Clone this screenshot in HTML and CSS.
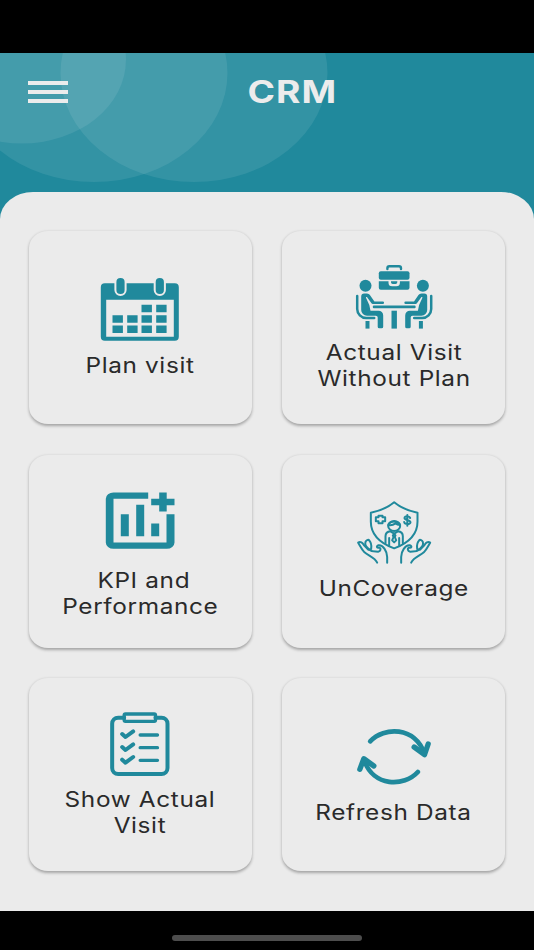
FILE: index.html
```html
<!DOCTYPE html>
<html lang="en">
<head>
    <meta charset="UTF-8">
    <meta name="viewport" content="width=device-width, initial-scale=1.0">
    <title>CRM</title>
    <link rel="stylesheet" href="styles.css">
</head>
<body>
    <div class="status-bar"></div>

    <div class="app">
        <header class="header">
            <svg class="circles" viewBox="0 0 534 163">
                <ellipse cx="22" cy="6.5" rx="104" ry="84"/>
                <ellipse cx="94" cy="20" rx="133.5" ry="109"/>
                <ellipse cx="194" cy="20" rx="133.5" ry="109"/>
            </svg>
            <button class="menu-btn" aria-label="Menu">
                <span></span>
                <span></span>
                <span></span>
            </button>
            <h1>CRM</h1>
        </header>

        <main class="sheet">
            <a class="card">
                <svg class="icon" viewBox="0 0 80 65">
                    <path fill-rule="evenodd" d="M5 6.3H74.8a4 4 0 0 1 4 4V59.7a4 4 0 0 1-4 4H4.8a4 4 0 0 1-4-4V10.3a4 4 0 0 1 4-4ZM6.2 22.7V59.7H73.8V22.7Z"/>
                    <g class="pins">
                        <rect x="15.4" y="0" width="10.2" height="18" rx="5"/>
                        <rect x="54.7" y="0" width="10.2" height="18" rx="5"/>
                    </g>
                    <path d="M41.5 27.7h10.4v7.6H41.5zM56.2 27.7h10.4v7.6H56.2zM12.5 38.2h10.4v7.6H12.5zM27.2 38.2h10.4v7.6H27.2zM41.5 38.2h10.4v7.6H41.5zM56.2 38.2h10.4v7.6H56.2zM12.5 48.4h10.4V56H12.5zM27.2 48.4h10.4V56H27.2zM41.5 48.4h10.4V56H41.5zM56.2 48.4h10.4V56H56.2z"/>
                </svg>
                <p>Plan visit</p>
            </a>

            <a class="card">
                <svg class="icon" viewBox="0 0 80 65">
                    <path class="line" stroke-width="2.4" d="M33.4 5V4.2a2 2 0 0 1 2-2h9.6a2 2 0 0 1 2 2V5"/>
                    <rect x="24.8" y="7.3" width="30.7" height="8.4" rx="2"/>
                    <path d="M24.8 17.3h9.7v1.4a3.6 3.6 0 0 0 3.6 3.6h4.2a3.6 3.6 0 0 0 3.6-3.6v-1.4h9.6v6.4a2 2 0 0 1-2 2H26.8a2 2 0 0 1-2-2z"/>
                    <path d="M37 17.3h6.3v1a1.8 1.8 0 0 1-1.8 1.8h-2.7a1.8 1.8 0 0 1-1.8-1.8z"/>
                    <g id="person">
                        <circle cx="11.5" cy="21.7" r="6"/>
                        <path d="M7.2 32.5a3 3 0 0 1 3-3h2.5c2 0 3.1 1 3.9 2.5l3.8 5.5h8.4a1.2 1.2 0 0 1 0 2.5h-9.4c-1 0-1.6-.3-2.1-1.1l-4.2-5.7c-.8-.6-1.3 0-1 .8l3.2 7 1.2 5.7h8a4.7 4.7 0 0 1 4.7 4.7v11.3a1.6 1.6 0 0 1-1.6 1.6h-2.3a1.6 1.6 0 0 1-1.6-1.6V53.5a1.8 1.8 0 0 0-1.8-1.8H13a5.8 5.8 0 0 1-5.8-5.8z"/>
                        <path class="line" stroke-width="2.5" d="M3.2 32v12.9a9 9 0 0 0 9 9h8"/>
                        <rect x="11.5" y="57" width="4" height="7.6"/>
                    </g>
                    <use href="#person" transform="translate(80.4) scale(-1 1)"/>
                    <rect x="18.8" y="41.5" width="42.8" height="2.8" rx="1"/>
                    <rect x="37.5" y="46.7" width="5.4" height="17.9"/>
                </svg>
                <p>Actual Visit<br>Without Plan</p>
            </a>

            <a class="card">
                <svg class="icon icon-chart" viewBox="0 0.5 92 75">
                    <path d="M54.2 11v6.3H19.5V61h53V32.7h8V61a7.7 6.3 0 0 1-7.7 6.3H19.5A7.7 6.3 0 0 1 11.8 61V17.3A7.7 6.3 0 0 1 19.5 11z"/>
                    <path d="M26.8 32.7h8v22h-8zM42.2 23.3h8v31.4h-8zM57.2 42h8v12.7h-8z"/>
                    <path d="M65.2 11h7.5v6.3h7.8v6.4h-7.8V30h-7.5v-6.3h-8v-6.4h8z"/>
                </svg>
                <p><span class="indent">KPI and</span><br>Performance</p>
            </a>

            <a class="card">
                <svg class="icon" viewBox="130.5 33 240 195">
                    <g class="line" stroke-width="6">
                        <path d="M251 40C232 56 207 66 181 71V98C181 137 211 163 251 178C291 163 321 137 321 98V71C295 66 270 56 251 40Z"/>
                        <path d="M204 80h12v5h8v12h-8v6h-12v-6h-8V85h8z"/>
                        <path d="M299 87c-1-6-17-7-17 0 0 8 18 5 18 13 0 7-18 7-19-1M290.5 78v32"/>
                        <ellipse cx="251" cy="111" rx="18" ry="15"/>
                        <path d="M233 108c10 2 18-2 22-5 4 4 8 5 14 5M235 104c8-9 24-9 32 0"/>
                        <path d="M225 163V142c0-9 6-14 15-15l11 7 11-7c9 1 15 6 15 15v21M236 147v22M266 147v22"/>
                        <path d="M251 135l-4 4 2 5-4 10 6 6 6-6-4-10 2-5z"/>
                        <g id="hand">
                            <path d="M200 221C193 205 175 201 162 190C154 182 149 171 143 161C150 156 156 162 160 168L173 182"/>
                            <path d="M183 184C167 178 162 166 165 159C167 153 173 152 175 153C180 158 184 166 182 179"/>
                            <path d="M176 182C184 189 192 187 203 188C211 187 212 178 207 176C199 178 196 171 204 169C218 167 230 188 230 204V221"/>
                        </g>
                        <use href="#hand" transform="translate(502) scale(-1 1)"/>
                    </g>
                </svg>
                <p>UnCoverage</p>
            </a>

            <a class="card">
                <svg class="icon" viewBox="151.5 33 240 195">
                    <g class="line" stroke-width="12">
                        <path d="M224 53H206a18 18 0 0 0-18 18V204a18 18 0 0 0 18 18H336a18 18 0 0 0 18-18V71a18 18 0 0 0-18-18H318"/>
                        <rect x="224" y="42" width="94" height="22" rx="4" stroke-width="10"/>
                        <path d="M218 102l10 9 23-17M218 141l10 9 23-17M218 179l10 9 23-17"/>
                        <path stroke-width="10" d="M272 105h52M272 143h52M272 181h52"/>
                    </g>
                </svg>
                <p>Show Actual<br>Visit</p>
            </a>

            <a class="card">
                <svg class="icon" viewBox="130.5 42 240 195">
                    <g class="line" stroke-width="14">
                        <path d="M179 94C220 50 314 48 342 132"/>
                        <path d="M311 111l31 23 11-32" stroke-width="16"/>
                        <path d="M322 186C281 231 188 232 161 150"/>
                        <path d="M148 178l12-32 30 22" stroke-width="16"/>
                    </g>
                </svg>
                <p>Refresh Data</p>
            </a>
        </main>
    </div>

    <footer class="nav-bar">
        <div class="nav-handle"></div>
    </footer>
</body>
</html>
```
FILE: styles.css
```css
* {
    box-sizing: border-box;
}

body {
    margin: 0;
    height: 950px;
    display: flex;
    flex-direction: column;
    background: #000;
    font-family: Inter, "Liberation Sans", sans-serif;
    overflow: hidden;
}

.status-bar {
    height: 53.4px;
}

.app {
    flex: 1;
    display: flex;
    flex-direction: column;
    background: #20899c;
}

.header {
    position: relative;
    height: 138.2px;
    padding: 0 28px;
    display: grid;
    grid-template-columns: 40px 1fr 40px;
    align-items: start;
}

/* decorative bubbles behind the title */
.circles {
    position: absolute;
    top: 0;
    left: 0;
    width: 534px;
    height: 163px;
    fill: rgba(255, 255, 255, 0.085);
}

.menu-btn {
    position: relative;
    display: flex;
    flex-direction: column;
    gap: 5px;
    width: 40px;
    margin-top: 28px;
    padding: 0;
    border: none;
    background: none;
}

.menu-btn span {
    height: 3.8px;
    background: #ececec;
}

h1 {
    position: relative;
    justify-self: center;
    margin: 20px 0 0 51px;
    color: #ececec;
    font-size: 31px;
    font-weight: 700;
    line-height: 38px;
    letter-spacing: 0.8px;
    transform: scaleX(1.2);
}

.sheet {
    position: relative;
    flex: 1;
    display: grid;
    grid-template-columns: 1fr 1fr;
    grid-auto-rows: 193px;
    gap: 30.5px;
    padding: 39.9px 29px 0;
    background: #ebebeb;
    border-radius: 33px 33px 0 0 / 27px 27px 0 0;
}

.card {
    display: flex;
    flex-direction: column;
    align-items: center;
    justify-content: center;
    gap: 11px;
    background: #ebebeb;
    border-radius: 19px / 17px;
    box-shadow: 0 1.5px 3px rgba(0, 0, 0, 0.3);
}

.card p {
    margin: 0;
    color: #2a2a2a;
    font-size: 21px;
    line-height: 26px;
    letter-spacing: 0.55px;
    text-align: center;
    white-space: nowrap;
    transform: scaleX(1.16);
}

.card .indent {
    padding-left: 6px;
}

.icon {
    width: 80px;
    height: 65px;
    fill: #20899c;
}

.icon-chart {
    width: 92px;
    height: 75px;
}

.icon .line {
    fill: none;
    stroke: #20899c;
    stroke-linecap: round;
    stroke-linejoin: round;
}

.pins {
    stroke: #ebebeb;
    stroke-width: 2;
}

.nav-bar {
    height: 39px;
    padding-top: 23.5px;
}

.nav-handle {
    width: 190px;
    height: 6px;
    margin: 0 auto;
    border-radius: 3px;
    background: #4d4d4d;
}
```
